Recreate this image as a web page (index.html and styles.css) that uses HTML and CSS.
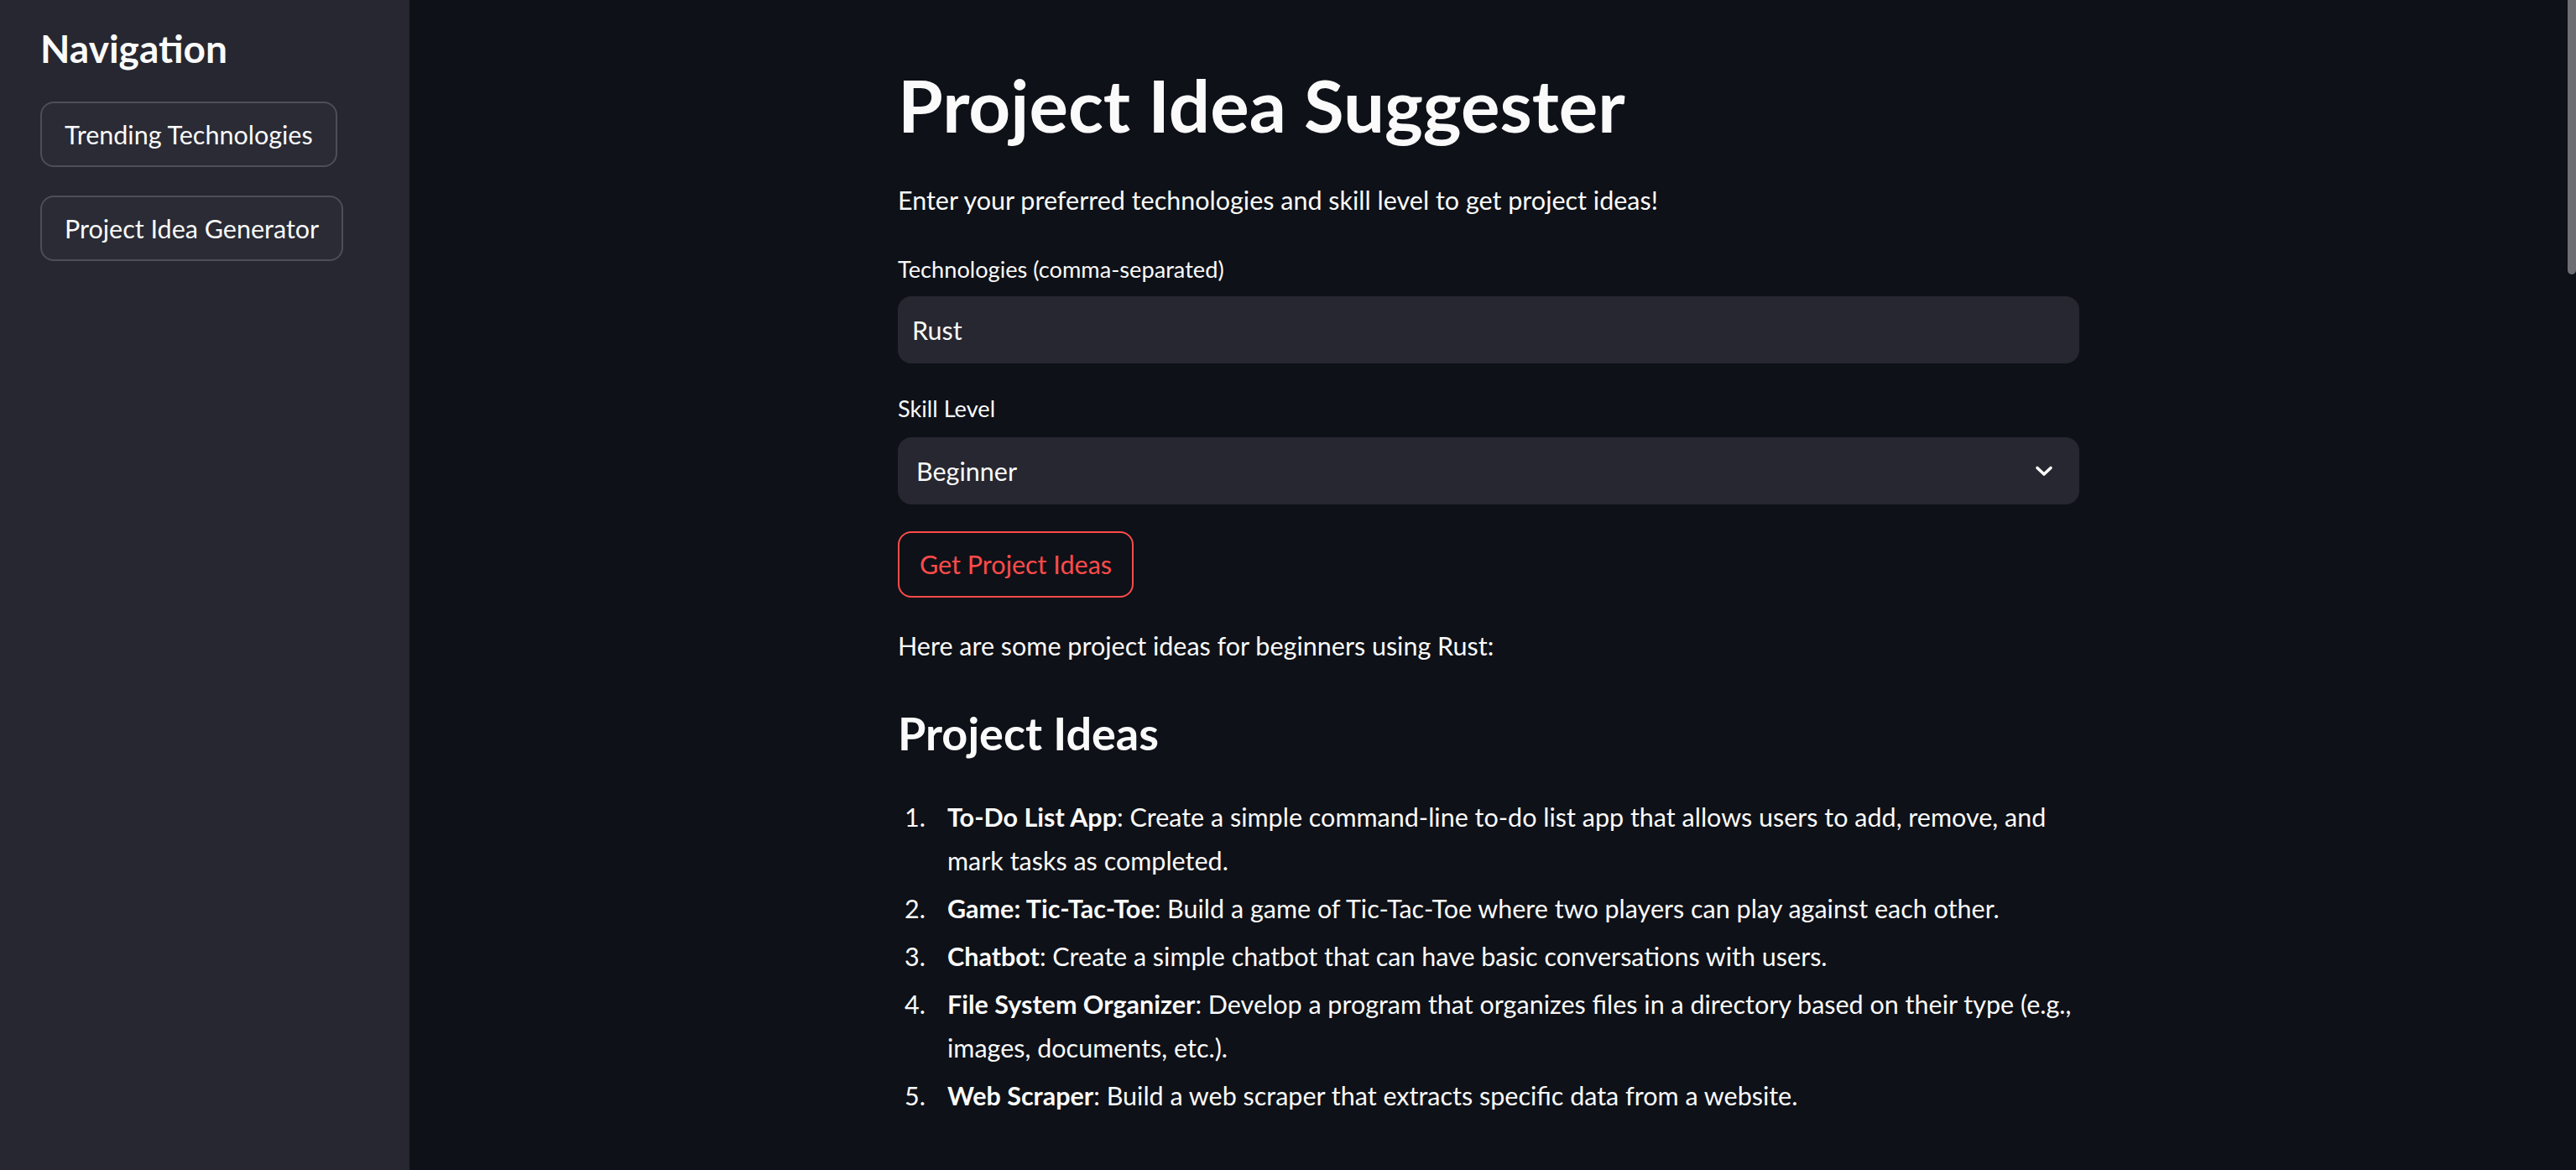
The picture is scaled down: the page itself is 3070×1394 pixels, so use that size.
FILE: index.html
```html
<!DOCTYPE html>
<html lang="en">
<head>
<meta charset="utf-8">
<title>Project Idea Suggester</title>
<link rel="stylesheet" href="styles.css">
</head>
<body>
<aside class="sidebar">
  <h2 class="side-title">Navigation</h2>
  <button class="side-btn">Trending Technologies</button>
  <button class="side-btn">Project Idea Generator</button>
</aside>
<main class="main">
  <div class="block">
    <h1 class="title">Project Idea Suggester</h1>
    <p class="lead">Enter your preferred technologies and skill level to get project ideas!</p>
    <label class="field-label first">Technologies (comma-separated)</label>
    <div class="input">Rust</div>
    <label class="field-label second">Skill Level</label>
    <div class="select">
      <span>Beginner</span>
      <svg class="chev" width="24" height="24" viewBox="0 0 24 24"><path d="M4 8.5 L12 16 L20 8.5" fill="none" stroke="#fafafa" stroke-width="3.6" stroke-linecap="round" stroke-linejoin="round"/></svg>
    </div>
    <button class="primary-btn">Get Project Ideas</button>
    <p class="para">Here are some project ideas for beginners using Rust:</p>
    <h3 class="sub">Project Ideas</h3>
    <ol class="ideas">
      <li><span class="num">1.</span><span class="txt"><b>To-Do List App</b>: Create a simple command-line to-do list app that allows users to add, remove, and mark tasks as completed.</span></li>
      <li><span class="num">2.</span><span class="txt"><b>Game: Tic-Tac-Toe</b>: Build a game of Tic-Tac-Toe where two players can play against each other.</span></li>
      <li><span class="num">3.</span><span class="txt"><b>Chatbot</b>: Create a simple chatbot that can have basic conversations with users.</span></li>
      <li><span class="num">4.</span><span class="txt"><b>File System Organizer</b>: Develop a program that organizes files in a directory based on their type (e.g., images, documents, etc.).</span></li>
      <li><span class="num">5.</span><span class="txt"><b>Web Scraper</b>: Build a web scraper that extracts specific data from a website.</span></li>
    </ol>
  </div>
  <div class="scroll-thumb"></div>
</main>
</body>
</html>
```

FILE: styles.css
```css
* { box-sizing: border-box; }
html, body { margin: 0; padding: 0; height: 100%; }
body {
  display: flex;
  background: #0e1117;
  color: #fafafa;
  font-family: Lato, "Noto Sans", sans-serif;
  overflow: hidden;
}
.sidebar {
  width: 488px;
  flex: 0 0 488px;
  background: #262730;
  padding: 30px 48px;
  display: flex;
  flex-direction: column;
  align-items: flex-start;
}
.side-title {
  margin: 0 0 36px 0;
  font-size: 46px;
  line-height: 1.2;
  font-weight: 700;
}
.side-btn {
  height: 78px;
  padding: 0 27px;
  margin-bottom: 34px;
  background: #2a2b35;
  color: #fafafa;
  border: 2px solid #4d4e57;
  border-radius: 16px;
  font-family: inherit;
  font-size: 30.5px;
}
.main {
  flex: 1;
  position: relative;
  display: flex;
  justify-content: center;
  padding-right: 10px;
}
.block {
  width: 1408px;
  padding-top: 73px;
  display: flex;
  flex-direction: column;
  align-items: flex-start;
}
.title {
  margin: 0;
  font-size: 87px;
  line-height: 1.2;
  font-weight: 700;
}
.lead {
  margin: 35px 0 0;
  font-size: 30.5px;
  line-height: 52px;
}
.field-label {
  font-size: 27.2px;
  line-height: 1.2;
}
.field-label.first { margin-top: 41px; }
.field-label.second { margin-top: 38px; }
.field-label.first + .input { margin-top: 15px; }
.field-label.second + .select { margin-top: 17px; }
.input, .select {
  width: 100%;
  height: 80px;
  background: #262730;
  border-radius: 16px;
  font-size: 30.5px;
  display: flex;
  align-items: center;
}
.input { padding-left: 17px; }
.select { padding: 0 30px 0 22px; justify-content: space-between; }
.chev { display: block; }
.primary-btn {
  margin-top: 32px;
  height: 79px;
  padding: 0 24px;
  background: #0e1117;
  color: #ff4b4b;
  border: 2px solid #ff4b4b;
  border-radius: 16px;
  font-family: inherit;
  font-size: 30.5px;
}
.para {
  margin: 31px 0 0;
  font-size: 30.5px;
  line-height: 52px;
}
.sub {
  margin: 47.5px 0 0;
  font-size: 54px;
  line-height: 1.2;
  font-weight: 700;
}
.ideas {
  list-style: none;
  margin: 39.7px 0 0;
  padding: 0;
  width: 100%;
  font-size: 30.5px;
  line-height: 52px;
}
.ideas li {
  display: grid;
  grid-template-columns: 59px 1fr;
  margin-bottom: 5px;
}
.num { padding-left: 8px; }
.ideas b { font-weight: 700; }
.scroll-thumb {
  position: absolute;
  top: 0;
  right: 0;
  width: 10px;
  height: 327px;
  background: #6d6e73;
  border-radius: 0 0 5px 5px;
}
```
